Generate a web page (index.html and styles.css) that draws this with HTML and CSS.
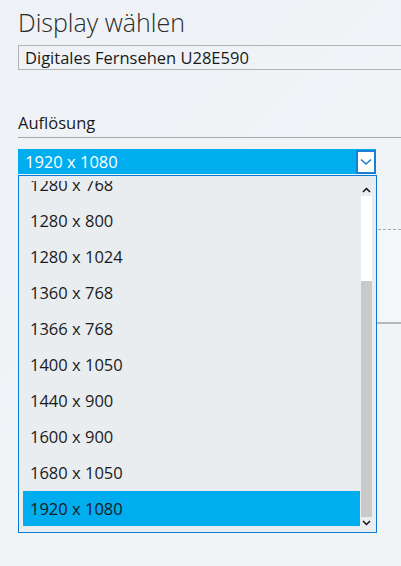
FILE: index.html
```html
<!DOCTYPE html>
<html lang="de">
<head>
    <meta charset="UTF-8">
    <meta name="viewport" content="width=device-width, initial-scale=1.0">
    <title>Display wählen</title>
    <link rel="stylesheet" href="styles.css">
</head>
<body>
    <h1>Display wählen</h1>
    <div class="display-box">Digitales Fernsehen U28E590</div>

    <div class="label">Auflösung</div>

    <div class="resolution">
        <div class="select-bar">
            <span>1920 x 1080</span>
            <div class="chevron-box">
                <svg width="12" height="8" viewBox="0 0 12 8"><path d="M1 1.5 L6 6 L11 1.5" fill="none" stroke="#1a7fd0" stroke-width="1.6"/></svg>
            </div>
        </div>

        <!-- settings behind the open list -->
        <div class="scaling"></div>

        <!-- open dropdown -->
        <div class="dropdown">
            <div class="viewport">
                <ul class="options">
                    <li>1280 x 768</li>
                    <li>1280 x 800</li>
                    <li>1280 x 1024</li>
                    <li>1360 x 768</li>
                    <li>1366 x 768</li>
                    <li>1400 x 1050</li>
                    <li>1440 x 900</li>
                    <li>1600 x 900</li>
                    <li>1680 x 1050</li>
                    <li class="selected">1920 x 1080</li>
                </ul>
            </div>
            <div class="scrollbar">
                <svg class="arrow" width="9" height="6" viewBox="0 0 9 6"><path d="M1 5 L4.5 1.5 L8 5" fill="none" stroke="#111" stroke-width="1.5"/></svg>
                <div class="track"></div>
                <div class="thumb"></div>
                <svg class="arrow" width="9" height="6" viewBox="0 0 9 6"><path d="M1 1 L4.5 4.5 L8 1" fill="none" stroke="#111" stroke-width="1.5"/></svg>
            </div>
        </div>
    </div>
</body>
</html>
```

FILE: styles.css
```css
body {
    font-family: "Open Sans", "Noto Sans", sans-serif;
    background: linear-gradient(135deg, #eef2f6, #f2f5f8);
    color: #1a1a1a;
    margin: 0;
    padding: 0 0 0 18px;
    overflow: hidden;
    height: 566px;
}
h1 {
    font-size: 25px;
    font-weight: 300;
    color: #2b2b2b;
    margin: 4px 0 0 0;
    line-height: 36px;
}
.display-box {
    margin-top: 5px;
    height: 23px;
    border: 1px solid #b3b3b3;
    border-right: none;
    margin-right: -4px;
    font-size: 16.5px;
    line-height: 23px;
    padding-left: 6px;
}
.label {
    margin-top: 41px;
    font-size: 16.5px;
    line-height: 24px;
    border-bottom: 1px solid #a8a8a8;
    padding-bottom: 2px;
}
.resolution {
    position: relative;
    margin-top: 11px;
}
.select-bar {
    width: 358px;
    height: 25px;
    background: #00adef;
    color: #fff;
    display: flex;
    align-items: center;
    justify-content: space-between;
    font-size: 16.5px;
}
.select-bar span {
    padding-left: 7px;
}
.chevron-box {
    width: 16px;
    height: 20px;
    background: #fff;
    border: 2px solid #1a7fd0;
    display: flex;
    align-items: center;
    justify-content: center;
}
.scaling {
    margin-top: 55px;
    height: 92px;
    border-top: 1px dashed #a9a9a9;
    border-bottom: 2px solid #b8b8b8;
    background: #f4f7fa;
}
.dropdown {
    position: absolute;
    top: 26px;
    left: 0;
    width: 359px;
    height: 358px;
    border: 1px solid #0a7ad6;
    background: #e9edf0;
    display: flex;
    padding: 5px 4px 6px 4px;
    box-sizing: border-box;
}
.viewport {
    width: 338px;
    overflow: hidden;
}
.options {
    list-style: none;
    margin: -14px 0 0 0;
    padding: 0;
}
.options li {
    height: 36px;
    line-height: 36px;
    padding-left: 7px;
    font-size: 16.5px;
    color: #1a1a1a;
}
.options li.selected {
    background: #00adef;
}
.scrollbar {
    width: 11px;
    margin-left: 1px;
    display: flex;
    flex-direction: column;
    align-items: center;
}
.arrow {
    flex: none;
    margin: 6px 0 3px 0;
}
.scrollbar .arrow:last-child {
    margin: 3px 0 0 0;
}
.track {
    width: 11px;
    height: 85px;
    background: #fff;
}
.thumb {
    width: 11px;
    flex: 1;
    background: #c9c9c9;
}
```
